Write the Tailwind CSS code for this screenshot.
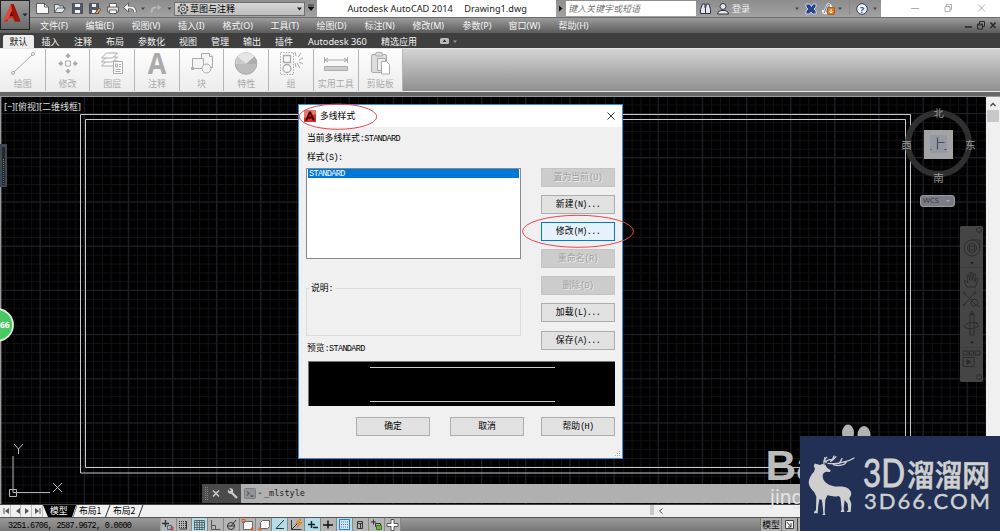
<!DOCTYPE html>
<html lang="zh-CN">
<head>
    <meta charset="UTF-8">
    <meta name="viewport" content="width=device-width, initial-scale=1.0">
    <script src="https://cdn.jsdelivr.net/npm/@tailwindcss/browser@4"></script>
    <title>Autodesk AutoCAD 2014 - Drawing1.dwg</title>
</head>
<body class="bg-black overflow-hidden font-['Noto_Sans','Noto_Sans_CJK_SC',sans-serif]">
    <div class="relative w-[1000px] h-[531px] flex flex-col overflow-hidden whitespace-nowrap leading-none">

        <!-- Title bar + menu bar -->
        <header class="flex h-[33px] shrink-0">
            <div class="w-[30px] h-[30px] shrink-0 border border-[#222] bg-linear-to-b from-[#9a9a9a] to-[#6a6a6a] relative z-10">
                <svg class="block" width="28" height="28" viewBox="1 1 28 28">
                    <path d="M3.500 21.500 11 4h2.500l7 17.500h-5.500l-3-4-3.500 1-1 3z" fill="#c5281c"/>
                    <path d="M11 4h2.500l7 17.500h-5.500L11.500 10z" fill="#9a150c"/>
                    <path d="M3.500 21.500 11 4l1 8-4 7z" fill="#e24a35"/>
                    <path d="M9.500 16l2.200-5 1.800 5z" fill="#5f0a06"/>
                    <path d="M22.500 13.500h5l-2.500 3z" fill="#23262c"/>
                </svg>
            </div>
            <div class="flex flex-col flex-1 -ml-[30px]">
                <div class="flex h-[18px] border-b border-[#6b6b6b] bg-white">
                    <!-- Quick access toolbar -->
                    <div class="w-[317px] shrink-0 bg-linear-to-b from-[#8d8d8d] to-[#a2a2a2] flex">
                        <svg class="block ml-[30px] shrink-0" width="144" height="17" viewBox="30 0 144 17">
                            <g stroke="#444" stroke-width=".8">
                                <path d="M36.500 3.500h8l4 3.500v6.500h-12z" fill="#f8f8f8"/>
                                <path d="M44.500 3.500v3.500h4" fill="none"/>
                                <path d="M54.500 12.500v-8h4l1 1.500h4v2h2l-3 4.500z" fill="#dde6f0"/>
                                <path d="M54.500 12.500l3-4.500h8" fill="none"/>
                                <path d="M72.500 3.500h10v10h-10z" fill="#4b5a70"/>
                                <path d="M74.500 3.500h6v4h-6zM74.500 9.500h6v4h-6z" fill="#eef1f5"/>
                                <path d="M89.500 3.500h9v10h-9z" fill="#4b5a70"/>
                                <path d="M91.500 3.500h5v4h-5zM91.500 9.500h5v4h-5z" fill="#eef1f5"/>
                                <path d="M95 13l4-5 2 1.500-4 4.500z" fill="#f0a23c"/>
                                <path d="M109.500 3.500h7v4h-7z" fill="#fff"/>
                                <path d="M107.500 7h11v5h-11z" fill="#dcdcdc"/>
                                <path d="M109.500 10h7v3.500h-7z" fill="#fff"/>
                            </g>
                            <path d="M126 7.500h5q4 0 4 5" fill="none" stroke="#444" stroke-width="3"/>
                            <path d="M123.500 7.500l5-4.500v9z" fill="#f2f2f2" stroke="#444" stroke-width=".8"/>
                            <path d="M127 7.500h4q4 0 4 5" fill="none" stroke="#f2f2f2" stroke-width="1.800"/>
                            <path d="M141 7.500h4l-2 2.500zM167.500 7.500h4l-2 2.500z" fill="#444"/>
                            <path d="M151.500 12.500q0-5 4-5h3" fill="none" stroke="#b9b9b9" stroke-width="2"/>
                            <path d="M162 7.500l-5-4v8z" fill="#b4b4b4" stroke="#888" stroke-width=".6"/>
                        </svg>
                        <div class="mt-[2px] w-[131px] h-[14px] border border-[#6f6f6f] bg-linear-to-b from-[#d6d6d6] to-[#bdbdbd] flex items-center">
                            <svg class="ml-[2px]" width="12" height="12" viewBox="0 0 12 12" fill="none" stroke="#444">
                                <circle cx="6" cy="6" r="4.900" stroke-width="1.200" stroke-dasharray="2.200 1.650"/>
                                <circle cx="6" cy="6" r="4" stroke-width=".7"/>
                                <circle cx="6" cy="6" r="1.700" stroke-width=".8"/>
                            </svg>
                            <span class="ml-px text-[9px] text-black leading-[12px]">草图与注释</span>
                            <svg class="ml-auto mr-[2px]" width="5" height="4"><path d="M0 .5h5L2.500 3.500z" fill="#222"/></svg>
                        </div>
                        <svg class="ml-[3px] mt-[4px]" width="6" height="8"><path d="M0 1h6M.2 3h5.600L3 6.500z" fill="#111" stroke="#111" stroke-width=".8"/></svg>
                    </div>
                    <div class="w-[239px] pl-[30.500px] text-[9.200px] leading-[17px] text-[#222] flex gap-[11.500px]">
                        <span>Autodesk AutoCAD 2014</span><span>Drawing1.dwg</span>
                    </div>
                    <!-- Info center -->
                    <div class="w-[325px] bg-linear-to-b from-[#8d8d8d] to-[#a2a2a2] flex">
                        <svg class="w-[10px] h-[17px]" viewBox="0 0 10 17"><path d="M3 5.500l3.500 3-3.500 3z" fill="#111"/></svg>
                        <div class="w-[130px] mt-px h-[15px] bg-white pl-[2px] text-[9px] leading-[15px] italic text-[#777]">键入关键字或短语</div>
                        <svg class="block" width="185" height="17" viewBox="696 0 185 17">
                            <g fill="#e4e7ec" stroke="#2c3442" stroke-width="1">
                                <path d="M702.500 4h2.500v3.500l.5.500v5.500h-5v-4zM706.500 4h2.500l1.500 5.500v4h-5V8z"/>
                                <circle cx="723" cy="6.500" r="3"/>
                                <path d="M717.500 14q0-3 3.500-3.500h4q3.500.5 3.500 3.500z"/>
                            </g>
                            <path d="M795 7.500h4l-2 2.500zM838 7.500h4l-2 2.500zM873 7.500h4l-2 2.500z" fill="#444"/>
                            <path d="M806 4h4l1.500 2.500L813 4h3v3l-2 2 2 2v3h-3l-2-2-2 2h-3v-3l2-2-2-2z" fill="#27468f" stroke="#dfe6f3" stroke-width=".8"/>
                            <path d="M824 13l3-7q1-3 3-1l2 3M823 10q-1 4 4 3" fill="none" stroke="#e8edf5" stroke-width="2"/>
                            <path d="M824 13l3-7q1-3 3-1" fill="none" stroke="#3b5e99" stroke-width=".7"/>
                            <rect x="827.500" y="7.500" width="7" height="7" rx="1" fill="#e07b1e" stroke="#9c4a06" stroke-width=".7"/>
                            <path d="M831 9v4M829.500 11.500l1.500 1.500 1.500-1.500" stroke="#fff" fill="none"/>
                            <path d="M849.500 2v13" stroke="#8a8a8a"/>
                            <circle cx="862" cy="9" r="5.300" fill="#f5f7fb" stroke="#32435f"/>
                            <text x="862" y="12.500" text-anchor="middle" font-size="9.500" font-weight="bold" fill="#2458a8">?</text>
                            <text x="732" y="12" font-size="9" fill="#efefef">登录</text>
                        </svg>
                    </div>
                    <svg class="block flex-1" height="17" viewBox="881 0 119 17" fill="none" stroke="#999" stroke-width=".8">
                        <path d="M911 8.500h8M945 6.500h5v5h-5zM946.500 6.500v-2h5v5h-1.500M978 4.500l7 7M985 4.500l-7 7"/>
                    </svg>
                </div>
                <nav class="flex h-[15px] pl-[40px] bg-linear-to-b from-[#9c9c9c] to-[#5c5c5c] text-[9px] leading-[15px] text-[#f4f4f4]">
                    <span class="w-[45.500px]">文件(F)</span>
                    <span class="w-[46px]">编辑(E)</span>
                    <span class="w-[46.500px]">视图(V)</span>
                    <span class="w-[44.500px]">插入(I)</span>
                    <span class="w-[48px]">格式(O)</span>
                    <span class="w-[46px]">工具(T)</span>
                    <span class="w-[48px]">绘图(D)</span>
                    <span class="w-[48px]">标注(N)</span>
                    <span class="w-[50px]">修改(M)</span>
                    <span class="w-[46px]">参数(P)</span>
                    <span class="w-[50px]">窗口(W)</span>
                    <span>帮助(H)</span>
                    <svg class="ml-auto mr-[3px]" width="33" height="15" viewBox="964 0 33 15" fill="none" stroke="#2a2a2a">
                        <path d="M965 9h7" stroke-width="1.600"/>
                        <path d="M977.500 6h5v5h-5zM979.500 6V3.500h5v5h-2M977.500 7h5" />
                        <path d="M990.500 4.500l5 5.500M995.500 4.500L990.500 10" stroke-width="1.600"/>
                    </svg>
                </nav>
            </div>
        </header>

        <!-- Ribbon tabs -->
        <div class="flex h-[15px] shrink-0 bg-[#3f3f3f] text-[9px] leading-[17px] text-[#f2f2f2]">
            <span class="ml-[3px] mt-[2px] w-[31px] h-[13px] rounded-t-[2px] bg-[#ececec] text-center leading-[13px] text-[#222]">默认</span>
            <span class="ml-[7.500px] w-[32.500px]">插入</span>
            <span class="w-[32px]">注释</span>
            <span class="w-[32px]">布局</span>
            <span class="w-[41px]">参数化</span>
            <span class="w-[32px]">视图</span>
            <span class="w-[32px]">管理</span>
            <span class="w-[32px]">输出</span>
            <span class="w-[33px]">插件</span>
            <span class="w-[73px] text-[9.200px]">Autodesk 360</span>
            <span class="w-[59px]">精选应用</span>
            <svg width="18" height="15" viewBox="0 0 18 15"><rect x="0" y="5" width="9" height="6" rx="1.500" fill="#bdbdbd"/><path d="M2.500 9h4l-2-2.500z" fill="#333"/><path d="M13 7.500h4l-2 2.500z" fill="#999"/></svg>
        </div>

        <!-- Ribbon panels -->
        <div class="h-[49px] shrink-0 bg-[#666] pb-[4px] border-b border-[#999]">
            <div class="h-[44px] flex border-y border-[#e6e6e6] bg-linear-to-b from-[#d4d4d4] to-[#909090]">
                <div class="w-[403px] flex pl-px bg-linear-to-b from-[#fdfdfd] to-[#ededed] text-[9px] text-[#aaa] text-center [&>div]:w-[44.700px] [&>div]:shrink-0 [&>div]:border-r [&>div]:border-[#b5b5b5] [&_svg]:block [&_svg]:mx-auto [&_svg]:mt-[2px] [&_svg]:mb-[3px]">
                    <div>
                        <svg width="26" height="25" viewBox="0 0 26 25" fill="none" stroke="#aaa"><path d="M4 21L22 4"/><circle cx="3" cy="22" r="1.500"/><circle cx="23" cy="3" r="1.500"/></svg>绘图
                    </div>
                    <div>
                        <svg width="26" height="25" viewBox="0 0 26 25" fill="#aaa"><path d="M10.500 10h5v5h-5z" fill="none" stroke="#aaa"/><path d="M12 7V5.500h-2L13 2l3 3.500h-2V7zM12 18v1.500h-2l3 3.500 3-3.500h-2V18zM8 11.500H6.500v-2L3 12.500l3.500 3v-2H8zM18 11.500h1.500v-2l3.500 3-3.500 3v-2H18z"/></svg>修改
                    </div>
                    <div>
                        <svg width="26" height="25" viewBox="0 0 26 25" fill="#fafafa" stroke="#aaa"><path d="M2.500 15l5-5h11l-5 5z"/><path d="M2.500 11l5-5h11l-5 5z"/><path d="M2.500 7l5-5h11l-5 5z"/><path d="M14.500 10.500h9v12h-9z"/><path d="M16.500 13h2v3h-2zM20 13.500h2M20 15.500h2M16.500 18.500h5M16.500 20.500h5"/></svg>图层
                    </div>
                    <div>
                        <svg width="26" height="25" viewBox="0 0 26 25" class="overflow-visible"><text x="13" y="22.500" text-anchor="middle" font-family="Open Sans" font-weight="700" font-size="28" textLength="18.500" lengthAdjust="spacingAndGlyphs" fill="#aaa">A</text></svg>注释
                    </div>
                    <div>
                        <svg width="26" height="25" viewBox="0 0 26 25" fill="#f4f4f4" stroke="#aaa"><path d="M12.500 2.500h8l3 3v11h-11z"/><path d="M20.500 2.500v3h3"/><path d="M3.500 7.500h11v10h-11z"/><circle cx="17.500" cy="17.500" r="4.500"/><path d="M2.500 16.500h2v2h-2z" fill="#aaa"/></svg>块
                    </div>
                    <div>
                        <svg width="26" height="25" viewBox="0 0 26 25"><circle cx="13" cy="12.500" r="10.800" fill="#bcbcbc" stroke="#aaa"/><path d="M13 13L4.500 5.500a11 11 0 0 1 17 0z" fill="#e6e6e6"/><path d="M13 13L4.500 5.500a11 11 0 0 0-2.300 7.500z" fill="#cacaca"/><path d="M13 13l8.500-7.500a11 11 0 0 1 2.300 7.500z" fill="#adadad"/></svg>特性
                    </div>
                    <div>
                        <svg width="26" height="25" viewBox="0 0 26 25" fill="none" stroke="#aaa"><path d="M2.500 1.500h13v22h-13z" stroke-dasharray="1.500 1.200"/><path d="M5.500 4.500h7v7h-7z" stroke-width="1.300"/><circle cx="9" cy="17.500" r="4" stroke-width="1.300"/><path d="M18 5l-1-4M20 6l3-4M21 9l4-2M21 11l4 2M19 12l3 5M17 12l1 4" /></svg>组
                    </div>
                    <div>
                        <svg width="26" height="25" viewBox="0 0 26 25" fill="none" stroke="#aaa"><path d="M1.500 6v6M24.500 6v6M2 9h22M5 7L2 9l3 2M21 7l3 2-3 2"/><path d="M1.500 15.500h23v4h-23z" fill="#ccc"/></svg>实用工具
                    </div>
                    <div>
                        <svg width="26" height="25" viewBox="0 0 26 25" fill="#ddd" stroke="#aaa"><rect x="4.500" y="3.500" width="15" height="18" rx="1.500"/><rect x="8.500" y="1.500" width="7" height="3.500" rx="1.500"/><path d="M10.500 7.500h8v12h-8z" fill="#eee"/><path d="M14.500 10.500h5l3 3v9.500h-8z" fill="#fff"/></svg>剪贴板
                    </div>
                </div>
            </div>
        </div>

        <!-- Drawing area -->
        <main class="relative h-[407px] shrink-0 flex justify-end bg-black">
            <svg class="absolute inset-0" width="1000" height="407" viewBox="0 97 1000 407" fill="none">
                <defs>
                    <pattern id="minor" x="40" y="113.300" width="8.830" height="8.840" patternUnits="userSpaceOnUse"><path d="M0 .5h9M.5 0v9" stroke="#111116"/></pattern>
                    <pattern id="major" x="39.500" y="113" width="44.150" height="44.200" patternUnits="userSpaceOnUse"><path d="M0 .5h45M.5 0v45" stroke="#20202c"/></pattern>
                </defs>
                <path d="M0 97h986v407H0z" fill="url(#minor)"/>
                <path d="M0 97h986v407H0z" fill="url(#major)"/>
                <path d="M.7 97v407" stroke="#999" stroke-width="1.400"/>
                <path d="M80.500 114.500h830v358.500h-830zM85.500 119.500h820v348h-820z" stroke="#c8c8c8"/>
                <text x="4" y="110.300" font-size="9" fill="#ddd">[−][俯视][二维线框]</text>

                <!-- side widget -->
                <path d="M0 144h7v43H0z" fill="#3f4850"/>
                <path d="M2 147h3v38H2z" fill="#22282e"/>
                <path d="M3.500 159v8" stroke="#8d8a22" stroke-dasharray="1 1"/>
                <path d="M3.500 167v17" stroke="#1f7ba0" stroke-dasharray="1 1"/>
                <circle cx="-3" cy="325" r="16" fill="#4bc763" stroke="#dfe9e1" stroke-width="1.800"/>
                <text x="0" y="328" font-size="8.500" font-weight="bold" fill="#fff">66</text>

                <!-- UCS icon -->
                <path d="M13 456v36.500h37M9.500 489.500h7v7h-7z" stroke="#b5b5b5"/>
                <path d="M14 444l4.500 5 4.500-5M18.500 449v5M53 483l9 9M62 483l-9 9" stroke="#bdbdbd"/>

                <!-- view cube -->
                <circle cx="938.500" cy="143.500" r="30.500" stroke="#2f2f2f" stroke-width="6"/>
                <path d="M924 130h29v29h-29z" fill="#a3a3a5"/>
                <path d="M930 135h17v18h-17z" fill="#9499a3"/>
                <path d="M937.500 137.500v12M937.500 142.500h7M930.500 149.500h1M944.500 149.500h2" stroke="#474a50" stroke-width="1.200"/>
                <g font-size="10.500" fill="#999" text-anchor="middle">
                    <text x="938.500" y="117">北</text><text x="938.500" y="181.500">南</text>
                    <text x="906.500" y="149">西</text><text x="970.500" y="149">东</text>
                </g>
                <rect x="920.500" y="195.500" width="34" height="11" rx="2.500" fill="#7c7c84" stroke="#9a9aa2"/>
                <text x="923" y="203.300" font-size="7.500" fill="#3a3a40">WCS</text>
                <path d="M946 200h4l-2 2z" fill="#aaa"/>

                <!-- navigation bar -->
                <rect x="960" y="226" width="23" height="156" rx="2" fill="#454545"/>
                <path d="M961 267.500h21M961 347.500h21" stroke="#3e3e3e"/>
                <g stroke="#2d2d2d">
                    <circle cx="979" cy="230" r="2.500"/><circle cx="979" cy="377" r="2.500"/>
                    <circle cx="972" cy="248" r="8"/><circle cx="972" cy="248" r="4.500"/><path d="M972 240h8v8M969.500 246h5v4h-5z"/>
                    <path d="M967 287l-3-6 1-1 3 3-1-8 1.500-.5 1.500 6v-8h2v8l2-7 1.500.5-1 8 2-4 1.500.5-2.500 8.500z"/>
                    <path d="M964 293l12 12M975 292l-11 13"/><circle cx="974.500" cy="302.500" r="3.500"/><path d="M977 305l3 3"/>
                    <circle cx="964" cy="293" r="1"/><circle cx="975" cy="293" r="1"/><circle cx="964" cy="305" r="1"/>
                    <path d="M970 335v-21l2-3 2 3v21zM964 327q7 4 15-1l-3-3M964 327q2-6 14-4"/>
                    <path d="M963 351h5v4h-5zM969.500 351h4v4h-4zM975 351h5v4h-5zM963 357.500h11v9h-11z"/>
                    <path d="M967 359.500v5l4-2.500z" fill="#2d2d2d"/>
                </g>
                <path d="M970 262h4l-2 2.500zM970 313.500h4l-2 2zM970 341.500h4l-2 2.500z" fill="#222"/>

                <ellipse cx="848" cy="433" rx="6" ry="8.500" fill="#b2b2b2"/><ellipse cx="864" cy="435" rx="6.500" ry="9" fill="#b2b2b2"/>
            </svg>

            <!-- vertical scrollbar -->
            <div class="relative w-[14px] h-full bg-[#f0f0f0] flex flex-col items-center">
                <svg class="mt-[5px]" width="8" height="5" fill="none" stroke="#444" stroke-width="1.300"><path d="M1.500 4L4 1.500 6.500 4"/></svg>
                <div class="mt-[3px] w-[12px] h-[12px] bg-[#c8c8c8]"></div>
            </div>

            <!-- command line -->
            <div class="absolute left-[202px] right-[14px] bottom-[1px] h-[19px] flex items-center bg-[#b0b0b0]">
                <svg class="shrink-0" width="39" height="19" viewBox="202 0 39 19">
                    <path d="M202 0h39v19h-39z" fill="#4a4a4a"/>
                    <path d="M205.500 3v13M207.500 3v13" stroke="#888" stroke-dasharray="1 1"/>
                    <path d="M213 6.500l6 6M219 6.500l-6 6" stroke="#ccc" stroke-width="1.500"/>
                    <path d="M231 8l6 6" fill="none" stroke="#ccc" stroke-width="2.300"/>
                    <circle cx="230.500" cy="7" r="2.700" fill="#ccc"/><path d="M230.500 7l-2.500-2.500" stroke="#4a4a4a" stroke-width="1.500"/>
                </svg>
                <svg class="ml-[3px]" width="19" height="13" viewBox="0 0 19 13">
                    <rect x=".5" y="1.500" width="11" height="10" rx="1" fill="#90959c" stroke="#7a7f86"/>
                    <path d="M3 4.500l2 2-2 2M6.500 9h3" fill="none" stroke="#333"/>
                    <path d="M14 5.500h4l-2 2z" fill="#666"/>
                </svg>
                <span class="ml-[1px] font-['DejaVu_Sans_Mono',monospace] text-[8.500px] text-[#222]">_mlstyle</span>
            </div>
        </main>

        <!-- Layout tabs -->
        <div class="flex h-[13px] shrink-0 bg-[#f0f0f0] border-t border-[#444] text-[8.800px] leading-[12px] text-black font-['Noto_Sans_CJK_SC',sans-serif]">
            <svg class="shrink-0" width="50" height="12" viewBox="0 0 50 12">
                <path d="M10.500 0v12M20.500 0v12M31.500 0v12M42.500 0v12" stroke="#bbb"/>
                <path d="M9 3v6L5 6zM20 3v6l-4-3zM25 3v6l4-3zM35 3v6l4-3z" fill="#555"/><path d="M4 3v6M40 3v6" stroke="#555"/>
                <path d="M43 0h7v12h-2z" fill="#000"/>
            </svg>
            <span class="w-[19px] bg-black text-white">模型</span>
            <svg width="10" height="12"><path d="M0 0h7L3 12H0z" fill="#000"/><path d="M8 0L4 12" stroke="#777"/></svg>
            <span class="w-[23px]">布局1</span>
            <svg width="11" height="12"><path d="M8 0L3.500 12" stroke="#333"/></svg>
            <span class="w-[23px]">布局2</span>
            <svg width="10" height="12"><path d="M7 0L2.500 12" stroke="#333"/></svg>
            <div class="ml-auto w-[4px] h-[10px] bg-[#c8c8c8]"></div>
            <svg class="mr-[336px]" width="10" height="12" fill="none" stroke="#555"><path d="M8.500 3.500L5.500 6l3 2.500"/></svg>
        </div>

        <!-- Status bar -->
        <footer class="flex h-[14px] shrink-0 bg-linear-to-b from-[#9a9a9a] to-[#787878] border-t border-[#555]">
            <div class="w-[160px] pl-[8px] pt-[4px] font-['Liberation_Mono',monospace] text-[8.500px] tracking-[-0.700px] text-black">3251.6706, 2587.9672, 0.0000</div>
            <svg class="block" width="241" height="13" viewBox="160 518 241 13" fill="none" stroke="#333">
                <path d="M160 518h241v13H160z" fill="#b5b5b5" stroke="none"/>
                <path d="M192 518h16v13h-16zM272 518h16v13h-16zM305 518h16v13h-16zM336.500 518h16v13h-16z" fill="#b5dde8" stroke="none"/>
                <path d="M160 518v13M176.500 518v13M191.500 518v13M207.500 518v13M223.500 518v13M239.500 518v13M255.500 518v13M271.500 518v13M287.500 518v13M304.500 518v13M320.500 518v13M336.500 518v13M352.500 518v13M368.500 518v13M384.500 518v13M400.500 518v13" stroke="#888"/>
                <path d="M162 523.500h7M165.500 520v7" stroke-width="1.400"/><path d="M167.500 525.500h4v4h-4z" stroke="#2e70a5"/><path d="M171 527h2v3h-2z" stroke="#c33"/>
                <path d="M179 521.500h8M179 523.500h8M179 525.500h8M179 527.500h8" stroke-dasharray="1 1"/><path d="M186.500 521v8h-7"/>
                <path d="M194.500 520.500h10v9h-10zM194 522.500h11M194 525h11M194 527.500h11M197 520v10M199.500 520v10M202 520v10" stroke="#455" stroke-width=".8"/>
                <path d="M211.500 520v9.500h9M211.500 525.500h4v4" stroke="#555"/>
                <circle cx="231" cy="526" r="3.500"/><path d="M231 526l5-6M227 526h8" />
                <path d="M243.500 521.500h9v8h-9z" fill="#fff" stroke="#666"/><path d="M242 519.500h3v3h-3zM251 528h2v2h-2z" stroke="#e2591b"/>
                <path d="M260.500 522.500l2-2h7v6l-2 2h-7z" fill="#fff" stroke="#666"/><circle cx="260" cy="529" r="1.300" stroke="#e2591b"/>
                <path d="M284 520l-8 8.500h8"/>
                <path d="M291.500 520v9.500h10M291.500 529.500l6-6"/><path d="M299 519.500l-3 4h3l-2 4 5-5h-3l2-3z" fill="#f4a522" stroke="#b36c06" stroke-width=".5"/>
                <path d="M308 524.500h7M311.500 521v7M313 527.500h5" stroke="#123" stroke-width="1.500"/>
                <path d="M323 525h10M328 520.500v8" stroke="#111" stroke-width="1.500"/>
                <path d="M339.500 519.500h10v10h-10z" fill="#cfe5f5" stroke="#2c7fc4"/><path d="M341 522h8M341 524.500h8M341 527h8" stroke="#3c86bd" stroke-dasharray="1 1"/>
                <path d="M357.500 521.500h5v7h-5zM357 523.500h6M360.500 523v5"/>
                <path d="M371 522h5M373.500 519.500v5M375.500 523.500h5v3h-5z"/><path d="M376.500 525.500h5v4h-5z" fill="#6cb33f" stroke="#3b7c18"/>
                <path d="M391 519.500h3v4h4v3h-4v4h-3v-4h-4v-3h4z" fill="#fff" stroke="#555"/>
            </svg>
            <div class="ml-[359px] w-[22px] bg-[#aeaeae] border-x border-[#777] text-center text-[8.800px] leading-[15px] text-black">模型</div>
            <svg class="bg-[#aeaeae]" width="18" height="13" fill="none" stroke="#444"><path d="M3.500 2.500h8v8h-8z" fill="#eee"/><path d="M5 4l4 5M9 5v4H6M15.500 0v13"/></svg>
        </footer>

        <!-- Multiline style dialog -->
        <section class="absolute left-[298px] top-[104px] w-[325px] h-[355px] border border-[#3a8fd6] bg-[#f0f0f0] flex flex-col text-[8.800px] text-black font-['Noto_Sans_CJK_SC',sans-serif] [&_i]:not-italic [&_i]:font-['Liberation_Mono',monospace] [&_i]:text-[8.500px] [&_i]:tracking-[-0.650px]">
            <div class="h-[22px] shrink-0 bg-white flex items-center pl-[5px] pr-[7px]">
                <svg width="12" height="12" viewBox="0 0 12 12"><path d="M0 0h12v12H0z" fill="#d8332b"/><path d="M0 0h12v4L0 8z" fill="#e9786f"/><path d="M1 10.500L5 1.500h2l4 9H8.500L8 8.500l-4 .5-.7 1.500z" fill="#4c0503"/><path d="M5 6.500L6 4l1 2.500z" fill="#d8332b"/></svg>
                <span class="ml-[4px]">多线样式</span>
                <svg class="ml-auto" width="8" height="8" stroke="#222" stroke-width=".9"><path d="M.5.500l7 7M7.500.500l-7 7"/></svg>
            </div>
            <div class="flex h-[234px] shrink-0 pl-[7px] pr-[7px]">
                <div class="w-[215px] flex flex-col">
                    <div class="mt-[7px] ml-[1px] h-[10px]">当前多线样式<i>:STANDARD</i></div>
                    <div class="mt-[9px] ml-[1px] h-[10px]">样式<i>(S):</i></div>
                    <div class="mt-[5px] h-[91px] border border-[#868b93] bg-white px-px">
                        <div class="h-[9px] bg-[#0078d7] text-white leading-[8px] pl-px"><i>STANDARD</i></div>
                    </div>
                    <fieldset class="mt-[23px] h-[54px] border border-[#dcdcdc] pl-[2px]">
                        <legend class="px-[2px] leading-[11px]">说明<i>:</i></legend>
                    </fieldset>
                    <div class="mt-[8px] ml-[1px] h-[10px]">预览<i>:STANDARD</i></div>
                </div>
                <div class="ml-auto mt-[41px] w-[74px] flex flex-col gap-[8.100px] text-center leading-[16px] [&>div]:h-[19px] [&>div]:shrink-0 [&>div]:border">
                    <div class="border-[#c4c4c4] bg-[#cccccc] text-[#a0a0a0] [text-shadow:1px_1px_0_#eee]">置为当前<i>(U)</i></div>
                    <div class="border-[#adadad] bg-[#e1e1e1]">新建<i>(N)...</i></div>
                    <div class="border-[#0078d7] bg-[#e5f1fb]">修改<i>(M)...</i></div>
                    <div class="border-[#c4c4c4] bg-[#cccccc] text-[#a0a0a0] [text-shadow:1px_1px_0_#eee]">重命名<i>(R)</i></div>
                    <div class="border-[#c4c4c4] bg-[#cccccc] text-[#a0a0a0] [text-shadow:1px_1px_0_#eee]">删除<i>(D)</i></div>
                    <div class="border-[#adadad] bg-[#e1e1e1]">加载<i>(L)...</i></div>
                    <div class="border-[#adadad] bg-[#e1e1e1]">保存<i>(A)...</i></div>
                </div>
            </div>
            <div class="ml-[9px] w-[307px] h-[45px] shrink-0 bg-black border-t border-l border-[#777] flex flex-col justify-between items-center pt-[5px] pb-[4px]">
                <div class="w-[185px] h-px bg-[#ccc]"></div>
                <div class="w-[185px] h-px bg-[#ccc]"></div>
            </div>
            <div class="mt-[11px] pl-[57px] flex text-center leading-[16px] [&>div]:w-[74px] [&>div]:h-[19px] [&>div]:border [&>div]:border-[#adadad] [&>div]:bg-[#e1e1e1]">
                <div>确定</div>
                <div class="ml-[20px]">取消</div>
                <div class="ml-[17px]">帮助<i>(H)</i></div>
            </div>
            <svg class="mt-auto ml-auto" width="8" height="8" stroke="#aaa" stroke-dasharray="1 1"><path d="M5 1.500h2M3 3.500h4M1 5.500h6"/></svg>
        </section>

        <!-- Red callouts -->
        <svg class="absolute inset-0 pointer-events-none" width="1000" height="531" fill="none" stroke="#e8474c">
            <ellipse cx="338" cy="116.700" rx="38.700" ry="12.600"/>
            <ellipse cx="578" cy="231.300" rx="55.500" ry="16"/>
        </svg>

        <!-- Watermarks -->
        <svg class="absolute left-[760px] top-[430px]" width="240" height="101" viewBox="760 430 240 101">
            <text x="765.500" y="480" font-family="Liberation Sans" font-weight="bold" font-size="42.500" fill="#bcbcbc">Ba</text>
            <text x="770" y="503.500" font-family="Noto Sans" font-size="19" fill="#e6e6e6">jing</text>
            <path d="M800 436h200v95H800z" fill="#223055"/>
            <!-- deer -->
            <g transform="translate(800 436) scale(.3333)">
                <path d="M44 76l16 5q8-7 16-1l5 9 11 8-2 6-13-1q-8 4-9 12 0 16 12 24 10 9 24 10h22q24 2 28 22-1 10-6 15l6 17-2 26h-12l5-7-2-19-10-12-1-6 2 6-3 28 2 10h-11l3-8-3-30q0-8-6-12-14 4-34-2l-6 14-2 38 2 10h-9l3-6-3-32-2-10-7-2-3 20-2 24h-10l-1-4 6-6 1-42-6-14q-16-14-17-30 2-20 16-34l3-12-4-4z" fill="#cfcfcf" transform="translate(0 10) scale(1 .955)"/>
                <path d="M72 82q-2-10 8-18M78 80q0-10 20-10l4-10M92 76q10-6 16-14M84 82q26 4 48-4 18-4 30-12M100 86q18 6 34-2l6-8M76 76l-2-10M118 82l8-14" fill="none" stroke="#cfcfcf" stroke-width="4" stroke-linecap="round"/>
            </g>
            <g font-family="Lato" fill="#d0d0d0" stroke="#d0d0d0">
                <text x="863" y="487" font-size="38" stroke-width=".9" textLength="42" lengthAdjust="spacingAndGlyphs">3D</text>
                <text x="907" y="485.500" font-family="Noto Sans CJK SC" font-weight="500" font-size="30" stroke-width=".6" textLength="83" lengthAdjust="spacingAndGlyphs">溜溜网</text>
                <text x="864" y="509" font-size="22" stroke-width=".4" textLength="126" lengthAdjust="spacing">3D66.COM</text>
            </g>
        </svg>
    </div>
</body>
</html>
